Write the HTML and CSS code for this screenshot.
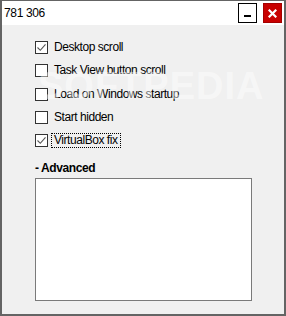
FILE: index.html
```html
<!DOCTYPE html>
<html>
<head>
<meta charset="utf-8">
<link rel="stylesheet" href="styles.css">
</head>
<body>
<div class="window">
  <div class="titlebar">
    <span class="title">781 306</span>
    <div class="buttons">
      <div class="btn min"><span class="dash"></span></div>
      <div class="btn close">
        <svg width="9" height="9" viewBox="0 0 9 9"><path d="M1.5 1.5 L7.5 7.5 M7.5 1.5 L1.5 7.5" stroke="#fff" stroke-width="2.2" stroke-linecap="square"/></svg>
      </div>
    </div>
  </div>
  <div class="content">
    <div class="options">
      <div class="row"><span class="box checked"><svg width="11" height="11" viewBox="0 0 11 11"><path d="M1.5 5.5 L4.3 8.3 L9.5 2.3" fill="none" stroke="#555" stroke-width="1.1"/></svg></span><span class="label">Desktop scroll</span></div>
      <div class="row"><span class="box"></span><span class="label">Task View button scroll</span></div>
      <div class="row"><span class="box"></span><span class="label">Load on Windows startup</span></div>
      <div class="row"><span class="box"></span><span class="label">Start hidden</span></div>
      <div class="row"><span class="box checked"><svg width="11" height="11" viewBox="0 0 11 11"><path d="M1.5 5.5 L4.3 8.3 L9.5 2.3" fill="none" stroke="#555" stroke-width="1.1"/></svg></span><span class="label focus">VirtualBox fix</span></div>
    </div>
    <div class="heading">- Advanced</div>
    <div class="textbox"></div>
  </div>
  <div class="watermark">SOFTPEDIA</div>
</div>
</body>
</html>
```

FILE: styles.css
```css
html, body {
  margin: 0;
  padding: 0;
}
body {
  font-family: "Liberation Sans", Arial, sans-serif;
  font-size: 12px;
  color: #000;
}
.window {
  position: relative;
  width: 286px;
  height: 316px;
  box-sizing: border-box;
  border: 2px solid #646464;
  border-top-width: 1px;
  background: #f0f0f0;
  overflow: hidden;
}
.titlebar {
  height: 24px;
  background: #fff;
  display: flex;
  align-items: center;
  justify-content: space-between;
}
.title {
  padding-left: 2px;
  letter-spacing: -0.35px;
  font-size: 12px;
  margin-top: -1px;
}
.buttons {
  display: flex;
  gap: 6px;
  padding-right: 2px;
  align-self: flex-start;
  margin-top: 2px;
}
.btn {
  width: 19px;
  height: 20px;
  box-sizing: border-box;
  display: flex;
  align-items: center;
  justify-content: center;
}
.min {
  background: #fff;
  border: 1px solid #000;
  align-items: flex-start;
}
.dash {
  width: 7px;
  height: 2px;
  background: #000;
  margin-top: 11px;
}
.close {
  background: #c80000;
  border: 1px solid #a40000;
}
.content {
  padding: 16px 0 0 33px;
}
.options {
  display: flex;
  flex-direction: column;
  gap: 10.25px;
}
.row {
  display: flex;
  align-items: center;
  height: 13px;
}
.box {
  width: 13px;
  height: 13px;
  box-sizing: border-box;
  border: 1px solid #333;
  background: #fff;
  display: flex;
  align-items: center;
  justify-content: center;
  flex: none;
}
.label {
  margin-left: 3px;
  border: 1px solid transparent;
  padding: 0 2px;
  line-height: 13px;
  letter-spacing: -0.45px;
  white-space: nowrap;
}
.focus {
  border: 1px dotted #000;
}
.heading {
  font-weight: bold;
  margin-top: 14px;
  line-height: 14px;
  letter-spacing: -0.4px;
}
.textbox {
  margin-top: 3px;
  width: 217px;
  height: 123px;
  box-sizing: border-box;
  border: 1px solid #7a7a7a;
  background: #fff;
}
.watermark {
  position: absolute;
  left: 36px;
  top: 64px;
  font-size: 38px;
  font-weight: bold;
  letter-spacing: 1px;
  color: rgba(255, 255, 255, 0.45);
  pointer-events: none;
}
```
